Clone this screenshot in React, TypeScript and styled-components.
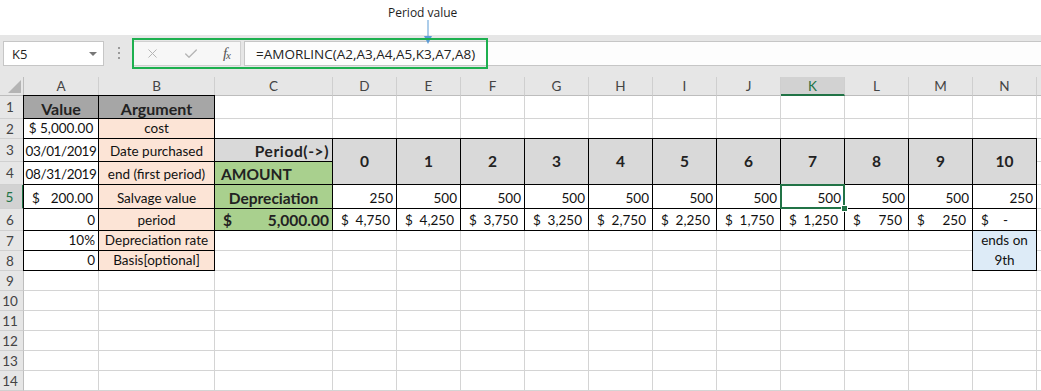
import styled, { createGlobalStyle, css } from 'styled-components';
import { X, Check } from 'lucide-react';

const GlobalStyle = createGlobalStyle`
  html, body {
    margin: 0;
    padding: 0;
    background: #fff;
  }
  body {
    width: 1041px;
    height: 391px;
    overflow: hidden;
    font-family: Lato, "Liberation Sans", sans-serif;
  }
`;

const Page = styled.div`
  position: relative;
  width: 1041px;
  height: 391px;
  overflow: hidden;
`;

const Caption = styled.div`
  height: 35px;
  background: #fff;
`;

const CaptionText = styled.div`
  position: absolute;
  left: 388px;
  top: 4px;
  font-family: "Open Sans", sans-serif;
  font-size: 12px;
  color: #1e1e1e;
`;

const Arrow = styled.svg`
  position: absolute;
  left: 423px;
  top: 20px;
`;

const Highlight = styled.div`
  position: absolute;
  left: 132px;
  top: 38px;
  width: 356px;
  height: 31px;
  box-sizing: border-box;
  border: 2px solid #1db04f;
  pointer-events: none;
`;

const FormulaBar = styled.div`
  display: flex;
  align-items: flex-start;
  height: 42px;
  padding: 6px 0 0 3px;
  box-sizing: border-box;
  background: #e6e6e6;
  font-family: "Open Sans", sans-serif;
  font-size: 13px;
  color: #222;
`;

const NameBox = styled.div`
  display: flex;
  align-items: center;
  justify-content: space-between;
  width: 101px;
  height: 25px;
  box-sizing: border-box;
  padding: 0 6px 0 8px;
  border: 1px solid #c6c6c6;
  background: #fff;
`;

const DropArrow = styled.span`
  width: 0;
  height: 0;
  border-left: 4px solid transparent;
  border-right: 4px solid transparent;
  border-top: 4px solid #777;
`;

const Grip = styled.div`
  display: flex;
  flex-direction: column;
  gap: 3px;
  margin: 6px 12px 0 14px;

  span {
    width: 2px;
    height: 2px;
    background: #9a9a9a;
  }
`;

const ButtonGroup = styled.div`
  display: flex;
  align-items: center;
  justify-content: space-between;
  width: 109px;
  height: 25px;
  box-sizing: border-box;
  padding: 0 10px 0 12px;
  border: 1px solid #d0d0d0;
  background: #f7f7f7;
  color: #b5b5b5;
`;

const Fx = styled.span`
  font-family: "Liberation Serif", serif;
  font-style: italic;
  font-size: 15px;
  color: #555;
  letter-spacing: -1px;

  sub {
    font-size: 11px;
    vertical-align: baseline;
    position: relative;
    top: 1px;
  }
`;

const FormulaInput = styled.div`
  flex: 1;
  display: flex;
  align-items: center;
  height: 25px;
  margin-left: 3px;
  box-sizing: border-box;
  padding-left: 11px;
  border: 1px solid #c6c6c6;
  border-right: none;
  background: #fdfdfd;
  font-size: 13.5px;
`;

const Sheet = styled.div`
  display: grid;
  grid-template-columns: 24px 75px 116px 118px repeat(11, 64px) 1fr;
  grid-template-rows: 19px 23px 20px 23px 23px 24px 22px repeat(8, 20px);
  background: #fff;
`;

const Corner = styled.div`
  display: flex;
  align-items: flex-end;
  justify-content: flex-end;
  padding: 0 2px 2px 0;
  box-sizing: border-box;
  background: #e6e6e6;
  border-right: 1px solid #bdbdbd;
  border-bottom: 1px solid #bdbdbd;
`;

const ColHead = styled.div<{ $active?: boolean }>`
  display: flex;
  align-items: center;
  justify-content: center;
  box-sizing: border-box;
  font-size: 13.5px;
  background: ${(p) => (p.$active ? '#d2d2d2' : '#e6e6e6')};
  color: ${(p) => (p.$active ? '#217346' : '#444')};
  border-right: 1px solid #cfcfcf;
  border-bottom: ${(p) => (p.$active ? '2px solid #217346' : '1px solid #bdbdbd')};
`;

const RowHead = styled.div<{ $active?: boolean }>`
  display: flex;
  align-items: center;
  justify-content: center;
  padding-right: 3px;
  box-sizing: border-box;
  font-size: 13.5px;
  background: ${(p) => (p.$active ? '#d2d2d2' : '#e6e6e6')};
  color: ${(p) => (p.$active ? '#217346' : '#444')};
  border-bottom: 1px solid #d0d0d0;
  border-right: ${(p) => (p.$active ? '2px solid #217346' : '1px solid #bdbdbd')};
`;

type Align = 'left' | 'center' | 'right' | 'split';

type CellProps = {
  $bg?: string;
  $align?: Align;
  $bold?: boolean;
  $size?: number;
  $boxed?: boolean;
  $rows?: number;
  $middle?: boolean;
  $selected?: boolean;
  $spread?: number;
};

const justify: Record<Align, string> = {
  left: 'flex-start',
  center: 'center',
  right: 'flex-end',
  split: 'space-between',
};

const Cell = styled.div<CellProps>`
  position: relative;
  display: flex;
  align-items: ${(p) => (p.$middle ? 'center' : 'flex-end')};
  justify-content: ${(p) => justify[p.$align ?? 'left']};
  box-sizing: border-box;
  padding: ${(p) => (p.$align === 'split' ? '0 3px 1px 8px' : '0 3px 1px')};
  border-right: 1px solid #d4d4d4;
  border-bottom: 1px solid #d4d4d4;
  background: ${(p) => p.$bg ?? '#fff'};
  font-size: ${(p) => p.$size ?? 13.5}px;
  font-weight: ${(p) => (p.$bold ? 700 : 400)};
  letter-spacing: ${(p) => p.$spread ?? 0}px;
  color: ${(p) => (p.$bold ? '#222' : '#111')};
  line-height: 17px;
  white-space: nowrap;
  grid-row: span ${(p) => p.$rows ?? 1};
  text-align: center;

  ${(p) =>
    p.$boxed &&
    css`
      &::after {
        content: '';
        position: absolute;
        inset: -1px;
        border: 1px solid #000;
        pointer-events: none;
        z-index: 1;
      }
    `}

  ${(p) =>
    p.$selected &&
    css`
      &::before {
        content: '';
        position: absolute;
        inset: -1px;
        border: 2px solid #217346;
        pointer-events: none;
        z-index: 2;
      }
    `}
`;

const Handle = styled.span`
  position: absolute;
  right: -4px;
  bottom: -4px;
  width: 5px;
  height: 5px;
  background: #217346;
  border: 1px solid #fff;
  z-index: 3;
`;

const Amount = styled.span<{ $pad?: number }>`
  padding-right: ${(p) => p.$pad ?? 0}px;
`;

const columns = ['A', 'B', 'C', 'D', 'E', 'F', 'G', 'H', 'I', 'J', 'K', 'L', 'M', 'N'];
const periods = ['0', '1', '2', '3', '4', '5', '6', '7', '8', '9', '10'];
const depreciation = ['250', '500', '500', '500', '500', '500', '500', '500', '500', '500', '250'];
const remaining = ['4,750', '4,250', '3,750', '3,250', '2,750', '2,250', '1,750', '1,250', '750', '250', '-'];

const PEACH = '#fce4d6';
const GREEN = '#a9d08e';
const GREY = '#d9d9d9';

const emptyPeriods = (count: number, row: string) =>
  Array.from({ length: count }, (_, i) => <Cell key={`${row}-${i}`} />);

function App() {
  return (
    <Page>
      <GlobalStyle />
      <Caption />
      <CaptionText>Period value</CaptionText>
      <Arrow width="10" height="25" viewBox="0 0 10 25">
        <line x1="5" y1="0" x2="5" y2="17" stroke="#5b9bd5" strokeWidth="1" />
        <polygon points="1,16 9,16 5,24" fill="#5b9bd5" />
      </Arrow>

      <FormulaBar>
        <NameBox>
          K5
          <DropArrow />
        </NameBox>
        <Grip>
          <span />
          <span />
          <span />
        </Grip>
        <ButtonGroup>
          <X size={15} strokeWidth={1.6} />
          <Check size={16} strokeWidth={2} />
          <Fx>
            f<sub>x</sub>
          </Fx>
        </ButtonGroup>
        <FormulaInput>=AMORLINC(A2,A3,A4,A5,K3,A7,A8)</FormulaInput>
      </FormulaBar>
      <Highlight />

      <Sheet>
        <Corner>
          <svg width="13" height="13" viewBox="0 0 13 13">
            <polygon points="13,0 13,13 0,13" fill="#b4b4b4" />
          </svg>
        </Corner>
        {columns.map((c) => (
          <ColHead key={c} $active={c === 'K'}>
            {c}
          </ColHead>
        ))}
        <ColHead />

        {/* row 1 */}
        <RowHead>1</RowHead>
        <Cell $bg="#a6a6a6" $boxed $bold $size={16} $align="center">Value</Cell>
        <Cell $bg="#a6a6a6" $boxed $bold $size={16} $align="center">Argument</Cell>
        <Cell />
        {emptyPeriods(11, 'r1')}
        <Cell />

        {/* row 2 */}
        <RowHead>2</RowHead>
        <Cell $boxed $align="center">$ 5,000.00</Cell>
        <Cell $bg={PEACH} $boxed $align="center">cost</Cell>
        <Cell />
        {emptyPeriods(11, 'r2')}
        <Cell />

        {/* row 3 */}
        <RowHead>3</RowHead>
        <Cell $boxed $align="center" $spread={-0.4}>03/01/2019</Cell>
        <Cell $bg={PEACH} $boxed $align="center">Date purchased</Cell>
        <Cell $bg={GREY} $boxed $bold $size={15.5} $spread={0.6} $align="right">Period(-&gt;)</Cell>
        {periods.map((p) => (
          <Cell key={p} $bg={GREY} $boxed $bold $size={15.5} $rows={2} $middle $align="center">
            {p}
          </Cell>
        ))}
        <Cell />

        {/* row 4 */}
        <RowHead>4</RowHead>
        <Cell $boxed $align="center" $spread={-0.4}>08/31/2019</Cell>
        <Cell $bg={PEACH} $boxed $align="center">end (first period)</Cell>
        <Cell $bg={GREEN} $boxed $bold $size={15.5} style={{ paddingLeft: 6 }}>AMOUNT</Cell>
        <Cell />

        {/* row 5 */}
        <RowHead $active>5</RowHead>
        <Cell $boxed $align="split">
          <span>$</span>
          <Amount $pad={2}>200.00</Amount>
        </Cell>
        <Cell $bg={PEACH} $boxed $align="center">Salvage value</Cell>
        <Cell $bg={GREEN} $boxed $bold $size={15.5} $align="center">Depreciation</Cell>
        {depreciation.map((v, i) => (
          <Cell key={i} $boxed $align="right" $selected={i === 7}>
            {v}
            {i === 7 && <Handle />}
          </Cell>
        ))}
        <Cell />

        {/* row 6 */}
        <RowHead>6</RowHead>
        <Cell $boxed $align="right">0</Cell>
        <Cell $bg={PEACH} $boxed $align="center">period</Cell>
        <Cell $bg={GREEN} $boxed $bold $size={15.5} $align="split">
          <span>$</span>
          <span>5,000.00</span>
        </Cell>
        {remaining.map((v, i) => (
          <Cell key={i} $boxed $align="split">
            <span>$</span>
            <Amount $pad={v === '-' ? 25 : 3}>{v}</Amount>
          </Cell>
        ))}
        <Cell />

        {/* row 7 */}
        <RowHead>7</RowHead>
        <Cell $boxed $align="right">10%</Cell>
        <Cell $bg={PEACH} $boxed $align="center">Depreciation rate</Cell>
        <Cell />
        {emptyPeriods(10, 'r7')}
        <Cell $bg="#ddebf7" $boxed $rows={2} $middle $align="center" style={{ lineHeight: '20px' }}>
          ends on
          <br />
          9th
        </Cell>
        <Cell />

        {/* row 8 */}
        <RowHead>8</RowHead>
        <Cell $boxed $align="right">0</Cell>
        <Cell $bg={PEACH} $boxed $align="center">Basis[optional]</Cell>
        <Cell />
        {emptyPeriods(10, 'r8')}
        <Cell />

        {[9, 10, 11, 12, 13, 14].map((r) => [
          <RowHead key={`h${r}`}>{r}</RowHead>,
          <Cell key={`a${r}`} />,
          <Cell key={`b${r}`} />,
          <Cell key={`c${r}`} />,
          ...emptyPeriods(11, `r${r}`),
          <Cell key={`f${r}`} />,
        ])}
      </Sheet>
    </Page>
  );
}

export default App;
